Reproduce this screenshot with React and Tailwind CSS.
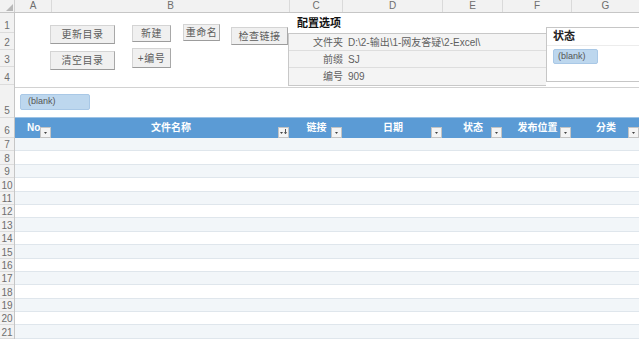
import React from "react";

const columns = [
  { label: "A", w: "w-[37px]" },
  { label: "B", w: "w-[238px]" },
  { label: "C", w: "w-[53px]" },
  { label: "D", w: "w-[100px]" },
  { label: "E", w: "w-[60px]" },
  { label: "F", w: "w-[69px]" },
  { label: "G", w: "w-[68px]" },
];

const tableHeads = [
  { text: "No", w: "w-[37px]", align: "justify-start pl-[12px]" },
  { text: "文件名称", w: "w-[238px]", align: "justify-center", sort: true },
  { text: "链接", w: "w-[53px]", align: "justify-center" },
  { text: "日期", w: "w-[100px]", align: "justify-center" },
  { text: "状态", w: "w-[60px]", align: "justify-center" },
  { text: "发布位置", w: "w-[69px]", align: "justify-center" },
  { text: "分类", w: "w-[68px]", align: "justify-center" },
];

const topRows = [
  { n: 1, h: "h-[20px]" },
  { n: 2, h: "h-[17px]" },
  { n: 3, h: "h-[17px]" },
  { n: 4, h: "h-[18px]" },
  { n: 5, h: "h-[33px]" },
  { n: 6, h: "h-[20px]" },
];

const dataRows = Array.from({ length: 15 }, (_, i) => i + 7);

function SheetButton({ children, className }) {
  return (
    <div
      className={`flex items-center justify-center bg-[#f0f0f0] border border-[#d4d4d4] border-b-[#9c9c9c] border-r-[#a8a8a8] text-[10px] text-[#5c5c5c] tracking-[0.5px] whitespace-nowrap ${className}`}
    >
      {children}
    </div>
  );
}

function FilterButton({ sort }) {
  return (
    <div className="absolute right-[1px] bottom-[0px] w-[11px] h-[11px] bg-[#f4f4f4] border border-[#c4c4c4] flex items-end justify-center pb-[2px]">
      <svg width="9" height="6" viewBox="0 0 9 6">
        {sort ? (
          <>
            <path d="M1 3h3l-1.5 2z" fill="#444" />
            <path d="M6.5 0v4.5M5.3 3.3l1.2 1.5 1.2-1.5" stroke="#444" strokeWidth="0.9" fill="none" />
          </>
        ) : (
          <path d="M3 3h3l-1.5 2z" fill="#444" />
        )}
      </svg>
    </div>
  );
}

export default function App() {
  return (
    <div className="w-[639px] h-[340px] overflow-hidden bg-white font-['Liberation_Sans','Noto_Sans_CJK_SC',sans-serif] text-[10px]">
      {/* column letters */}
      <div className="flex h-[13px] bg-[#f2f2f2] border-b border-[#c6c6c6]">
        <div className="w-[15px] shrink-0 border-r border-[#d0d0d0] flex items-end justify-end p-[1px]">
          <svg width="7" height="7" viewBox="0 0 7 7">
            <path d="M7 0v7H0z" fill="#b8b8b8" />
          </svg>
        </div>
        {columns.map((c) => (
          <div
            key={c.label}
            className={`${c.w} shrink-0 border-r border-[#dadada] flex items-center justify-center text-[10px] text-[#6e6e6e] leading-none`}
          >
            {c.label}
          </div>
        ))}
      </div>

      <div className="flex">
        {/* row numbers */}
        <div className="w-[15px] shrink-0 bg-[#f2f2f2] border-r border-[#c6c6c6] flex flex-col">
          {topRows.map((r) => (
            <div
              key={r.n}
              className={`${r.h} shrink-0 border-b border-[#dcdcdc] flex items-end justify-center pb-[1px] text-[10px] text-[#6e6e6e] leading-none`}
            >
              {r.n}
            </div>
          ))}
          {dataRows.map((n) => (
            <div
              key={n}
              className="h-[13.4px] shrink-0 border-b border-[#dcdcdc] flex items-end justify-center text-[10px] text-[#6e6e6e] leading-none"
            >
              {n}
            </div>
          ))}
        </div>

        {/* sheet */}
        <div className="flex-1 flex flex-col min-w-0">
          {/* rows 1-4: buttons, settings, slicer */}
          <div className="relative h-[72px] flex items-start">
            <div className="w-[273px] shrink-0 flex items-start pl-[35px] pt-[11px]">
              <div className="flex flex-col">
                <SheetButton className="w-[65px] h-[19px] mt-[1px]">更新目录</SheetButton>
                <SheetButton className="w-[65px] h-[19px] mt-[7px]">清空目录</SheetButton>
              </div>
              <div className="flex flex-col ml-[17px]">
                <SheetButton className="w-[39px] h-[17px] mt-[1px]">新建</SheetButton>
                <SheetButton className="w-[39px] h-[20px] mt-[6px]">+编号</SheetButton>
              </div>
              <SheetButton className="w-[37px] h-[17px] ml-[12px]">重命名</SheetButton>
              <SheetButton className="w-[57px] h-[18px] ml-[11px] mt-[3px]">检查链接</SheetButton>
            </div>

            <div className="w-[258px] shrink-0 flex flex-col">
              <div className="h-[20px] flex items-center pl-[9px] text-[11px] font-bold text-[#111]">配置选项</div>
              <div className="border-t border-l border-b border-[#c8c8c8] bg-[#f4f4f4] text-[#5f5f5f]">
                {[
                  ["文件夹", "D:\\2-输出\\1-网友答疑\\2-Excel\\"],
                  ["前缀", "SJ"],
                  ["编号", "909"],
                ].map(([k, v], i) => (
                  <div key={k} className={`h-[17px] flex items-center ${i < 2 ? "border-b border-[#dedede]" : ""}`}>
                    <div className="w-[55px] text-right pr-[1px]">{k}</div>
                    <div className="pl-[4px] whitespace-nowrap">{v}</div>
                  </div>
                ))}
              </div>
            </div>

            <div className="absolute left-[531px] top-[14px] w-[110px] h-[55px] bg-white border border-[#c6c6c6] flex flex-col">
              <div className="h-[18px] flex items-center pl-[6px] text-[11px] font-bold text-[#222] border-b border-[#ececec]">状态</div>
              <div className="pl-[6px] pt-[3px]">
                <div className="w-[45px] h-[15px] rounded-[2px] bg-[#bdd7ee] border border-[#a9c8e6] flex items-center pl-[4px] text-[9px] text-[#555]">
                  (blank)
                </div>
              </div>
            </div>
          </div>

          {/* row 5 */}
          <div className="h-[33px] flex flex-col border-b border-[#9dc3e6]">
            <div className="h-[2px]" />
            <div className="flex-1 border-t border-[#d2d2d2] pl-[5px] pt-[6px]">
              <div className="w-[70px] h-[16px] rounded-[2px] bg-[#bdd7ee] border border-[#a9c8e6] flex items-center pl-[7px] text-[9px] text-[#555]">
                (blank)
              </div>
            </div>
          </div>

          {/* row 6: table header */}
          <div className="h-[20px] flex bg-[#5b9bd5]">
            {tableHeads.map((h) => (
              <div
                key={h.text}
                className={`${h.w} shrink-0 relative flex items-start pt-[5px] ${h.align} text-[10px] font-bold text-white leading-none`}
              >
                {h.text}
                <FilterButton sort={h.sort} />
              </div>
            ))}
          </div>

          {/* rows 7-21 */}
          {dataRows.map((n) => (
            <div
              key={n}
              className={`h-[13.4px] shrink-0 border-b border-[#dfe6ec] ${n % 2 === 1 ? "bg-[#f2f6f9]" : "bg-white"}`}
            />
          ))}
        </div>
      </div>
    </div>
  );
}
